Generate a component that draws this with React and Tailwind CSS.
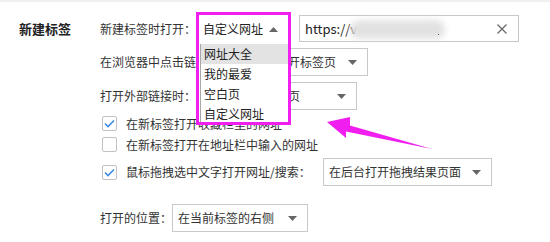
import React from "react";

const font = { fontFamily: '"Noto Sans CJK SC", "Microsoft YaHei", sans-serif' };

function Caret({ up = false }) {
  return (
    <svg width="9" height="5" viewBox="0 0 9 5" className="shrink-0">
      {up ? <polygon points="0,5 9,5 4.5,0" fill="#666" /> : <polygon points="0,0 9,0 4.5,5" fill="#666" />}
    </svg>
  );
}

function Select({ text, className }) {
  return (
    <div className={`flex items-center justify-between border border-[#c8c8c8] bg-white pl-[5px] pr-[10px] h-[28px] ${className}`}>
      <span className="whitespace-nowrap overflow-hidden">{text}</span>
      <Caret />
    </div>
  );
}

function Check({ checked }) {
  return (
    <div className="w-[15px] h-[15px] border border-[#c2c2c2] rounded-[2px] bg-white flex items-center justify-center shrink-0">
      {checked && (
        <svg width="11" height="9" viewBox="0 0 11 9">
          <polyline points="1,4.5 4,7.5 10,1.5" fill="none" stroke="#3d8ce6" strokeWidth="1.6" />
        </svg>
      )}
    </div>
  );
}

export default function App() {
  return (
    <div className="relative w-[550px] h-[242px] bg-white overflow-hidden text-[12px] text-[#333] leading-none" style={font}>
      <div className="h-[2px] bg-[#f0f0f0]" />
      <div className="flex pl-[19px] pt-[13px]">
        <div className="w-[81px] h-[27px] flex items-center font-bold text-[13px] text-[#222]">新建标签</div>
        <div className="flex flex-col">
          {/* row 1 */}
          <div className="flex items-center h-[27px]">
            <span className="w-[98px] whitespace-nowrap">新建标签时打开：</span>
            <div className="w-[92px] h-[27px]" />
            <div className="ml-[9px] w-[220px] h-[27px] border border-[#c8c8c8] flex items-center pl-[5px] pr-[10px] relative">
              <span className="text-[13px] text-[#222]">https://v</span>
              <div className="absolute left-[50px] top-[4px] w-[95px] h-[19px] rounded-full bg-[#e2e2e2] blur-[3px]" />
              <div className="absolute left-[138px] top-[18px] w-[1px] h-[1px] bg-[#555]" />
              <svg className="ml-auto" width="12" height="12" viewBox="0 0 12 12">
                <path d="M1.5 1.5 L10.5 10.5 M10.5 1.5 L1.5 10.5" stroke="#666" strokeWidth="1.2" />
              </svg>
            </div>
          </div>
          {/* row 2 */}
          <div className="flex items-center h-[28px] mt-[6px]">
            <span className="w-[134px] whitespace-nowrap">在浏览器中点击链接时：</span>
            <Select text="在后台打开标签页" className="w-[134px]" />
          </div>
          {/* row 3 */}
          <div className="flex items-center h-[28px] mt-[6px]">
            <span className="w-[98px] whitespace-nowrap">打开外部链接时：</span>
            <Select text="在新标签打开网页" className="w-[159px]" />
          </div>
          {/* checkboxes */}
          <div className="flex items-center h-[15px] mt-[6px] ml-[2px]">
            <Check checked />
            <span className="ml-[9px] whitespace-nowrap">在新标签打开收藏栏里的网址</span>
          </div>
          <div className="flex items-center h-[15px] mt-[6px] ml-[2px]">
            <Check />
            <span className="ml-[9px] whitespace-nowrap">在新标签打开在地址栏中输入的网址</span>
          </div>
          <div className="flex items-center h-[28px] mt-[6px] ml-[2px]">
            <Check checked />
            <span className="ml-[9px] w-[197px] whitespace-nowrap">鼠标拖拽选中文字打开网址/搜索：</span>
            <Select text="在后台打开拖拽结果页面" className="w-[169px]" />
          </div>
          {/* last row */}
          <div className="flex items-center h-[28px] mt-[18px]">
            <span className="w-[72px] whitespace-nowrap">打开的位置：</span>
            <Select text="在当前标签的右侧" className="w-[136px]" />
          </div>
        </div>
      </div>

      {/* open dropdown highlighted with magenta frame */}
      <div className="absolute left-[196px] top-[12px] w-[95px] h-[113px] border-[3px] border-[#f01ff0] bg-white overflow-hidden">
        <div className="relative h-[28px] flex items-center pl-[4px] text-[#222]">
          <span className="whitespace-nowrap">自定义网址</span>
          <div className="absolute left-[70px] top-[12px]">
            <Caret up />
          </div>
        </div>
        <div className="ml-[1px] border-l border-[#a8a8a8] h-[90px] text-[#222]">
          <div className="h-[20px] mt-[1px] bg-[#e3e3e3] flex items-center pl-[3px] whitespace-nowrap">网址大全</div>
          <div className="h-[20px] flex items-center pl-[3px] whitespace-nowrap">我的最爱</div>
          <div className="h-[20px] flex items-center pl-[3px] whitespace-nowrap">空白页</div>
          <div className="h-[20px] flex items-center pl-[3px] whitespace-nowrap">自定义网址</div>
        </div>
      </div>

      {/* magenta arrow annotation */}
      <svg className="absolute left-0 top-0" width="550" height="242" viewBox="0 0 550 242">
        <polygon points="327,122 350,117 350,125.5 432,149 346,131.5 346,138" fill="#f01ff0" />
      </svg>
    </div>
  );
}
